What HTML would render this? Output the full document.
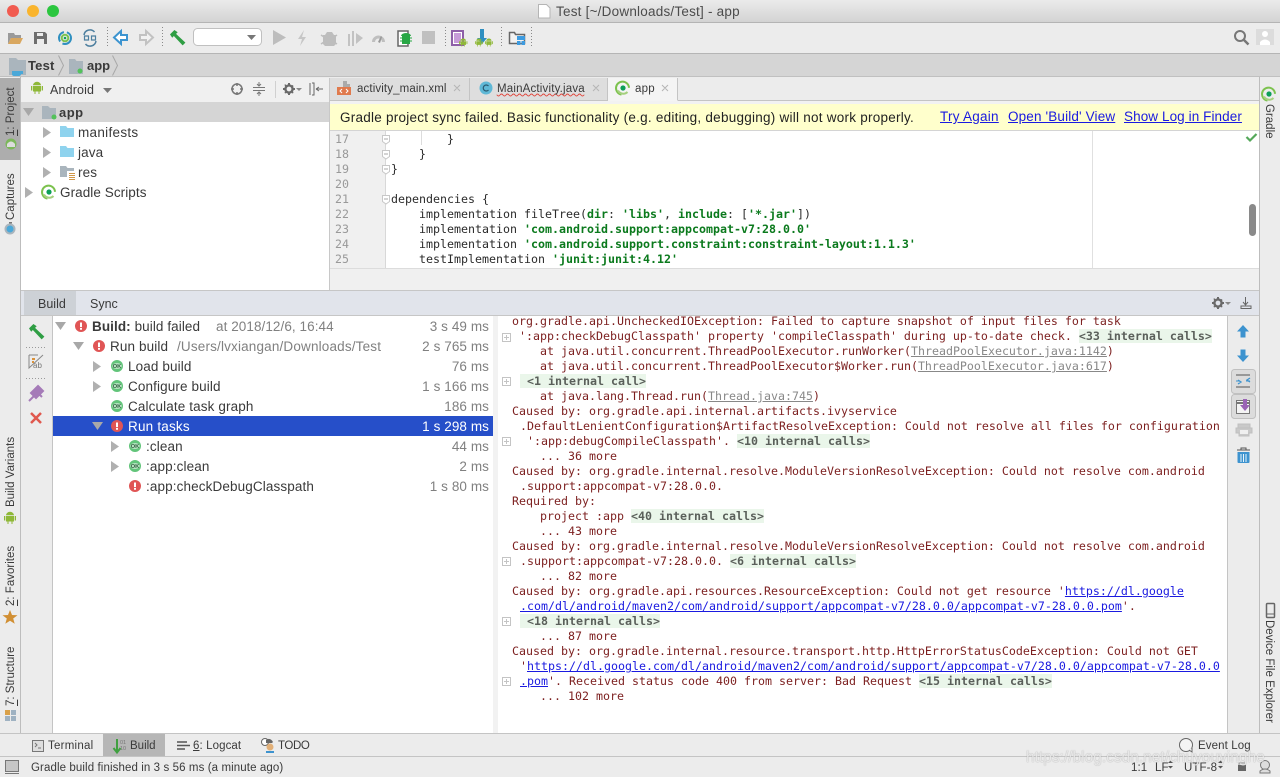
<!DOCTYPE html>
<html><head><meta charset="utf-8"><title>Test</title>
<style>
html,body{margin:0;padding:0}
body{width:1280px;height:777px;overflow:hidden;position:relative;background:#ececec;font-family:"Liberation Sans",sans-serif;font-size:13px;color:#333}
.b{position:absolute}
.t{position:absolute;white-space:pre;line-height:16px;font-size:13.5px;color:#3a3a3a;letter-spacing:.12px}
.x{font-size:11.5px;letter-spacing:.1px}
.r{letter-spacing:.08px;right:791px}
.g{color:#808080}
.m{position:absolute;white-space:pre;line-height:15px;height:15px;font-family:"DejaVu Sans Mono",monospace;font-size:11.63px;color:#7c1f1f}
.c{color:#2b2b2b}
.s{color:#0b7a1d;font-weight:bold}
.n{position:absolute;left:335px;width:30px;font-family:"DejaVu Sans Mono",monospace;font-size:11.63px;line-height:15px;color:#999}
.f{background:#eaf6ea;color:#5a5f5a;font-weight:bold}
.l{color:#1a1ae0;text-decoration:underline}
.u{color:#888;text-decoration:underline}
.v{position:absolute;writing-mode:vertical-rl;transform:rotate(180deg);white-space:pre;font-size:11.5px;line-height:14px;color:#3a3a3a}
.w{position:absolute;writing-mode:vertical-rl;white-space:pre;font-size:11.5px;line-height:14px;color:#3a3a3a}
svg{position:absolute;left:0;top:0}
a{color:#1a1ae0;text-decoration:underline}
</style></head><body>

<div class="b" style="left:0;top:0;width:1280px;height:22px;background:linear-gradient(#ebebeb,#d3d3d3);border-bottom:1px solid #b4b4b4"></div>
<div class="b" style="left:0;top:23px;width:1280px;height:30px;background:#ececec;border-bottom:1px solid #b5b5b5"></div>
<div class="b" style="left:0;top:54px;width:1280px;height:22px;background:#d5d5d5;border-bottom:1px solid #c0c0c0"></div>

<div class="b" style="left:0;top:77px;width:20px;height:656px;background:#ececec;border-right:1px solid #bdbdbd"></div>
<div class="b" style="left:0;top:78px;width:20px;height:82px;background:#adadad"></div>
<div class="b" style="left:1259px;top:77px;width:21px;height:656px;background:#ececec;border-left:1px solid #bdbdbd"></div>

<div class="b" style="left:21px;top:78px;width:309px;height:24px;background:#f0f0f0;border-bottom:1px solid #d8d8d8"></div>
<div class="b" style="left:21px;top:102px;width:309px;height:188px;background:#fff"></div>
<div class="b" style="left:21px;top:102px;width:309px;height:20px;background:#d5d5d5"></div>
<div class="b" style="left:329px;top:78px;width:1px;height:212px;background:#c8c8c8"></div>

<div class="b" style="left:330px;top:78px;width:929px;height:22px;background:#ececec;border-bottom:1px solid #c4c4c4"></div>
<div class="b" style="left:330px;top:78px;width:139px;height:22px;background:#dedede;border-right:1px solid #c4c4c4"></div>
<div class="b" style="left:470px;top:78px;width:137px;height:22px;background:#dedede;border-right:1px solid #c4c4c4"></div>
<div class="b" style="left:608px;top:78px;width:69px;height:22px;background:#f4f4f4;border-right:1px solid #c4c4c4;border-bottom:1px solid #f4f4f4"></div>
<div class="b" style="left:330px;top:101px;width:929px;height:3px;background:#f2f2f2"></div>
<div class="b" style="left:330px;top:104px;width:929px;height:26px;background:#ffffcc;border-bottom:1px solid #d4d4d4"></div>
<div class="b" style="left:330px;top:131px;width:929px;height:137px;background:#fff"></div>
<div class="b" style="left:330px;top:131px;width:55px;height:137px;background:#f0f0f0;border-right:1px solid #d8d8d8"></div>
<div class="b" style="left:1092px;top:131px;width:1px;height:137px;background:#e0e0e0"></div>
<div class="b" style="left:330px;top:268px;width:929px;height:22px;background:#f0f0f0;border-top:1px solid #dcdcdc;box-sizing:border-box"></div>
<div class="b" style="left:1249px;top:204px;width:7px;height:32px;background:#8a8a8a;border-radius:4px"></div>

<div class="b" style="left:21px;top:290px;width:1238px;background:#e1e4eb;border-top:1px solid #c6c6c6;border-bottom:1px solid #c6c6c6;box-sizing:border-box;height:26px"></div>
<div class="b" style="left:24px;top:291px;width:52px;height:24px;background:#cdd1d6"></div>

<div class="b" style="left:21px;top:316px;width:31px;height:417px;background:#ececec;border-right:1px solid #c4c4c4"></div>
<div class="b" style="left:53px;top:316px;width:440px;height:417px;background:#fff"></div>
<div class="b" style="left:493px;top:316px;width:5px;height:417px;background:#f2f2f2"></div>
<div class="b" style="left:498px;top:316px;width:729px;height:417px;background:#fff"></div>
<div class="b" style="left:1227px;top:316px;width:32px;height:417px;background:#ececec;border-left:1px solid #c4c4c4;box-sizing:border-box"></div>
<div class="b" style="left:53px;top:416px;width:440px;height:20px;background:#264fc9"></div>

<div class="b" style="left:0;top:733px;width:1280px;height:23px;background:#ececec;border-top:1px solid #c4c4c4;box-sizing:border-box"></div>
<div class="b" style="left:103px;top:734px;width:62px;height:22px;background:#b6b6b6"></div>
<div class="b" style="left:0;top:756px;width:1280px;height:21px;background:#ececec;border-top:1px solid #c4c4c4;box-sizing:border-box"></div>

<svg width="1280" height="777" viewBox="0 0 1280 777">
<defs>
<g id="tr"><path d="M0 0l8 5.500-8 5.500z" fill="#b0b0b0"/></g>
<g id="td"><path d="M0 0h11l-5.500 8z" fill="#a8a8a8"/></g>
<g id="ok"><circle cx="6" cy="6" r="6" fill="#62c47a"/><ellipse cx="6" cy="6" rx="4.800" ry="3" fill="#b9e4c3"/><text x="6" y="8" font-size="5.800" font-weight="bold" text-anchor="middle" fill="#2f5f3f" font-family="Liberation Sans">OK</text></g>
<g id="er"><circle cx="6" cy="6" r="6" fill="#e05555"/><path d="M5 2.500h2v4.600H5zM5 8h2v1.800H5z" fill="#fff"/></g>
<g id="fo"><path d="M0 1h6l1.500 2H14v9H0z" fill="#8fd3ee"/></g>
<g id="gf"><path d="M0 1h6l1.500 2H14v9H0z" fill="#aab5bd"/></g>
<g id="gr"><path d="M5.500 13.500A6.500 6.500 0 1 1 13 6.800" fill="none" stroke="#7cc24e" stroke-width="2"/><path d="M2 9.500A6 6 0 0 0 11.500 11" fill="none" stroke="#a5d07e" stroke-width="2"/><circle cx="7" cy="7" r="2.600" fill="#0d9f58"/></g>
<g id="gear"><circle cx="6" cy="6" r="3.600" fill="none" stroke="#6a6a6a" stroke-width="2.400"/><path d="M5 0h2v2H5zM5 10h2v2H5zM0 5h2v2H0zM10 5h2v2h-2zM1.500 1.500l1.500 0 .5 1.500-1.500.5zM8.500 8.500l1.500 0 .5 1.500-1.500.5zM1.500 9l1.500-.5.5 1.500-1.500.5zM8.500 2.500l1.500-.5.5 1.500-1.500.5z" fill="#6a6a6a"/></g>
<g id="and"><path d="M2 5h8v5.500H8.500V13h-1v-2.500h-3V13h-1v-2.500H2zM0 5h1.300v4.500H0zM10.700 5H12v4.500h-1.300zM2 4.300A4 3.500 0 0 1 10 4.300z" fill="#8fb838"/></g>
<g id="ham"><path d="M0 4L4 0l3 2-1.500 1.500 8.500 8-2.500 2.500-8-8.500L2 7z" fill="#2f9e44"/></g>
<g id="pl"><path d="M.5.500h8v8h-8zM2 4.500h5M4.500 2v5" fill="#fff" stroke="#c4c4c4"/></g>
<g id="fm"><path d="M.5.500h7v6l-3.500 2.500-3.500-2.500z" fill="#fff" stroke="#c8c8c8"/><path d="M2 4h4" stroke="#aaa"/></g>
</defs>

<circle cx="13" cy="11" r="6" fill="#f15b50"/><circle cx="33" cy="11" r="6" fill="#f9b42d"/><circle cx="53" cy="11" r="6" fill="#2bc63f"/>
<path d="M538.500 4.500h8l3.500 3.500v10h-11.500z" fill="#fff" stroke="#b5b5b5"/>

<path d="M8 33h6l1 2h6v3H11l-3 6z" fill="#9a9a9a"/><path d="M11 38h12l-3 6H8z" fill="#d9a75f"/>
<path d="M34 32h11l2 2v10H34z" fill="#6e6e6e"/><path d="M37 33h6v3h-6zM37 39h7v5h-7z" fill="#ececec"/>
<g transform="translate(57 30)"><circle cx="8" cy="8" r="6" fill="none" stroke="#2f8fc0" stroke-width="2" stroke-dasharray="12 3"/><circle cx="8" cy="8" r="3.300" fill="none" stroke="#7cc24e" stroke-width="2"/><circle cx="8" cy="8" r="1.300" fill="#0d9f58"/></g>
<g transform="translate(82 30)" fill="none" stroke="#4d7f9f" stroke-width="1.500"><path d="M2 5a6 6 0 0 1 10.500-3M14 11a6 6 0 0 1-10.500 3"/><path d="M2.500 6h4v4h-4zM9.500 6h4v4h-4z" stroke-width="1.200"/></g>
<path d="M121 31l-7 6.500 7 6.500v-4h6v-5h-6z" fill="#fff" stroke="#3c94d0" stroke-width="2"/>
<path d="M146 31l7 6.500-7 6.500v-4h-6v-5h6z" fill="#f2f2f2" stroke="#c2c2c2" stroke-width="2"/>
<use href="#ham" transform="translate(170 30) scale(1.100)"/>
<rect x="193.500" y="28.500" width="68" height="17" rx="4" fill="#fff" stroke="#c0c0c0"/>
<path d="M247 35h9l-4.500 5z" fill="#777"/>
<path d="M273 30l13 7.500-13 7.500z" fill="#bdbdbd"/>
<path d="M304 30l-6 9h4l-2 7 6-9h-4z" fill="#c6c6c6"/>
<path d="M323 35h2l2-3h5l2 3h2v9l-2 2h-9l-2-2z" fill="#bdbdbd"/><path d="M321 35l3 2M337 35l-3 2M321 44l3-2M337 44l-3-2" stroke="#bdbdbd" stroke-width="1.500"/>
<path d="M348 34h2v12h-2zM352 31h2v15h-2zM356 33l7 5-7 6z" fill="#c2c2c2"/>
<path d="M372 42a6.500 6.500 0 1 1 13 0h-3a3.500 3.500 0 1 0-7 0z" fill="#bfbfbf"/><path d="M378 42l3-6 1 1-2 6z" fill="#999"/>
<path d="M398 31h10v15h-10z" fill="#fff" stroke="#666" stroke-width="1.500"/>
<path d="M402 36h8v8h-8z" fill="#28a745"/><path d="M400 38h12M400 41h12" stroke="#28a745"/><path d="M401 36a5 3 0 0 1 10 0z" fill="#28a745"/>
<rect x="422" y="31" width="13" height="13" fill="#c0c0c0"/>
<path d="M107.500 27v21M162.500 27v21M445.500 27v21M501.500 27v21M531.500 27v21" stroke="#8a8a8a" stroke-dasharray="1 2" fill="none"/>
<path d="M452 31h11v14h-11z" fill="#fff" stroke="#8e5fa8" stroke-width="2"/><path d="M454 33h7v10h-7z" fill="#c79bd9"/>
<use href="#and" transform="translate(459 38) scale(.7 .65)"/>
<path d="M480 29h4v9h3l-5 6-5-6h3z" fill="#2f8fc0"/>
<use href="#and" transform="translate(485 38) scale(.65)"/><use href="#and" transform="translate(475 38) scale(.65)"/>
<path d="M509.500 32.500h5l1 2h9v9h-15z" fill="#f2f2f2" stroke="#666" stroke-width="1.500"/>
<path d="M517 36h8v4h-8zM517 41h3.500v4H517zM521.500 41h3.500v4h-3.500z" fill="#3d9be0"/>
<circle cx="1240" cy="36" r="5" fill="none" stroke="#777" stroke-width="2"/><path d="M1244 40l4.500 4.500" stroke="#777" stroke-width="2.500"/>
<rect x="1256" y="29" width="18" height="16" fill="#dcdcdc"/><circle cx="1265" cy="34" r="3" fill="#fff"/><path d="M1260 45v-3q5-5 10 0v3z" fill="#fff"/>

<path d="M9 58h7l2 2h8v15H9z" fill="#aab5bd"/><path d="M12 71h9v3q0 2-2 2h-5q-2 0-2-2z" fill="#4ba8d8"/><path d="M21 71h2v3h-2z" fill="#4ba8d8"/>
<path d="M58.500 55.500l5 10-5 10M112.500 55.500l5 10-5 10" fill="none" stroke="#a8a8a8"/>
<path d="M69 59h6l1.500 2H83v13H69z" fill="#aab5bd"/><circle cx="80" cy="71" r="2.500" fill="#52c25a"/>

<use href="#and" transform="translate(31 81)"/>
<path d="M103 88h9l-4.500 5z" fill="#777"/>
<circle cx="237" cy="89" r="5" fill="none" stroke="#777" stroke-width="1.500"/><path d="M237 83v3M237 92v3M231 89h3M240 89h3" stroke="#777" stroke-width="1.500"/>
<path d="M253 87.500h12M253 90.500h12M259 82v4M257 84l2 2 2-2M259 96v-4M257 94l2-2 2 2" stroke="#777" fill="none"/>
<path d="M275.500 81v17" stroke="#d0d0d0"/>
<use href="#gear" transform="translate(283 83)"/><path d="M296 88h6l-3 3z" fill="#888"/>
<path d="M310 83v12M312 83h2v12h-2" fill="none" stroke="#666"/><path d="M316 89h7M316 89l3-2M316 89l3 2" fill="none" stroke="#666"/>

<path d="M343 81h4v6h-4zM347 84h3v3h-3z" fill="#aaa"/><rect x="337" y="87" width="14" height="8" fill="#e07a4d"/><path d="M342 89l-2 2 2 2M346 89l2 2-2 2" fill="none" stroke="#fff"/>
<circle cx="486" cy="88" r="6.500" fill="#5fb8d6"/><path d="M488.500 86a3 3 0 1 0 0 4" fill="none" stroke="#2a5a70" stroke-width="1.200"/>
<path d="M497 94q1.500 2 3 0t3 0 3 0 3 0 3 0 3 0 3 0 3 0 3 0 3 0 3 0 3 0 3 0 3 0 3 0 3 0 3 0 3 0 3 0 3 0 3 0 3 0 3 0 3 0 3 0 3 0 3 0 3 0 3 0" fill="none" stroke="#e0443a" stroke-width=".9" transform="translate(0 1)" stroke-linecap="round"/>
<path d="M454 85l6 6M460 85l-6 6M593 85l6 6M599 85l-6 6M662 85l6 6M668 85l-6 6" stroke="#b5b5b5" fill="none"/>
<use href="#gr" transform="translate(616 81)"/>

<use href="#td" transform="translate(23 108)"/>
<path d="M42 106h6l2 2h6v11H42z" fill="#aab5bd"/><circle cx="54" cy="117" r="2.500" fill="#52c25a"/>
<use href="#tr" transform="translate(43 127)"/><use href="#tr" transform="translate(43 147)"/><use href="#tr" transform="translate(43 167)"/><use href="#tr" transform="translate(25 187)"/>
<use href="#fo" transform="translate(60 125)"/><use href="#fo" transform="translate(60 145)"/><use href="#gf" transform="translate(60 165)"/>
<rect x="67" y="171" width="9" height="10" fill="#fff"/><path d="M69 173.500h6M69 175.500h6M69 177.500h6M69 179.500h6" stroke="#d1984a"/>
<use href="#gr" transform="translate(42 185)"/>

<circle cx="11" cy="144" r="5.500" fill="#7cb85a"/><path d="M7 147h8v-3q-4-5-8 0z" fill="#dcdcdc"/>
<circle cx="10" cy="229" r="5.500" fill="#aab5bd"/><circle cx="10" cy="229" r="3.500" fill="#4ba8d8"/><path d="M9 222h3v1.500H9z" fill="#777"/>
<use href="#and" transform="translate(4 511)"/>
<path d="M10 610l2 5 5.500.2-4.300 3.300 1.500 5.300-4.700-3.100-4.700 3.100 1.500-5.300-4.300-3.300 5.500-.2z" fill="#d18f33"/>
<path d="M5 710h5v5H5z" fill="#d9a14a"/><path d="M11 710h5v5h-5zM5 716h5v5H5zM11 716h5v5h-5z" fill="#9fb2c2"/>

<use href="#gr" transform="translate(1262 87)"/>
<path d="M1246.500 137l3.500 3.500 6.500-6.500" fill="none" stroke="#55a85a" stroke-width="2.200"/>
<rect x="1266.500" y="603.500" width="8" height="14" rx="1" fill="none" stroke="#666" stroke-width="1.500"/><path d="M1267 614h7" stroke="#666"/>

<use href="#fm" transform="translate(382 135)"/><use href="#fm" transform="translate(382 150)"/><use href="#fm" transform="translate(382 165)"/><use href="#fm" transform="translate(382 195)"/>
<path d="M421.500 131v14" stroke="#dcdcdc"/>

<use href="#ham" transform="translate(29 324) scale(1.100)"/>
<path d="M26 347.500h20M26 378.500h20" stroke="#999" stroke-dasharray="1 2"/>
<path d="M29 355h9M29 355v13l14-13" fill="none" stroke="#888"/><path d="M32 358h3v2h-3zM32 361h2v2h-2z" fill="#d9913a"/>
<text x="33" y="368" font-size="8" fill="#777" font-family="Liberation Sans">ab</text>
<path d="M29 401l6-6M34 389l8 8M38 386l5 5-7 7-5-5z" stroke="#a57bb8" fill="#a57bb8" stroke-width="2"/>
<path d="M31 413l10 10M41 413l-10 10" stroke="#e0584e" stroke-width="2.500"/>

<use href="#td" transform="translate(55 322)"/><use href="#er" transform="translate(75 320)"/>
<use href="#td" transform="translate(73 342)"/><use href="#er" transform="translate(93 340)"/>
<use href="#tr" transform="translate(93 361)"/><use href="#ok" transform="translate(111 360)"/>
<use href="#tr" transform="translate(93 381)"/><use href="#ok" transform="translate(111 380)"/>
<use href="#ok" transform="translate(111 400)"/>
<path d="M92 422h11l-5.500 8z" fill="#a8a8a8"/><use href="#er" transform="translate(111 420)"/>
<use href="#tr" transform="translate(111 441)"/><use href="#ok" transform="translate(129 440)"/>
<use href="#tr" transform="translate(111 461)"/><use href="#ok" transform="translate(129 460)"/>
<use href="#er" transform="translate(129 480)"/>

<use href="#gear" transform="translate(1212 297)"/><path d="M1225 302h6l-3 3z" fill="#888"/>
<path d="M1245.500 297v8M1243 302l2.500 3 2.500-3" fill="none" stroke="#666"/><path d="M1241 306h10v2.500h-10z" fill="none" stroke="#666"/>

<path d="M1243 325l6 6.500h-3.500v6h-5v-6H1237z" fill="#3d93cf"/>
<path d="M1243 362l6-6.500h-3.500v-6h-5v6H1237z" fill="#3d93cf"/>
<rect x="1231.500" y="369.500" width="24" height="24" rx="3" fill="#dcdcdc" stroke="#c0c0c0"/>
<rect x="1231.500" y="394.500" width="24" height="24" rx="3" fill="#dcdcdc" stroke="#c0c0c0"/>
<path d="M1236 375h9M1236 387h5M1243 375h7M1240 387h10" stroke="#555"/><path d="M1236 381h14" stroke="#3d93cf" stroke-dasharray="4 6"/><path d="M1250 378l-3 2 3 2M1238 384l3-2-3-2" fill="none" stroke="#3d93cf" stroke-width="1.300"/>
<rect x="1236.500" y="400.500" width="13" height="13" fill="#f4f4f4" stroke="#777"/><path d="M1237 402h12v2h-12z" fill="#777"/><path d="M1243 399h4v6h3l-5 6-5-6h3z" fill="#9a64b5"/>
<path d="M1238 428v-4h12v4M1236 428h16v5h-3v3h-10v-3h-3z" fill="#c9c9c9" stroke="#bfbfbf"/><rect x="1240" y="430" width="8" height="4" fill="#f0f0f0"/>
<path d="M1237 450h13M1241 450v-2h5v2" stroke="#555" fill="none"/><path d="M1237.500 452h12v10a1 1 0 0 1-1 1h-10a1 1 0 0 1-1-1z" fill="#3d93cf"/><path d="M1241 454v8M1243.500 454v8M1246 454v8" stroke="#e8f4fb"/>

<use href="#pl" transform="translate(502 333)"/><use href="#pl" transform="translate(502 377)"/><use href="#pl" transform="translate(502 437)"/><use href="#pl" transform="translate(502 557)"/><use href="#pl" transform="translate(502 617)"/><use href="#pl" transform="translate(502 677)"/>

<rect x="32.500" y="740.500" width="11" height="11" fill="#dedede" stroke="#777"/><path d="M35 743l2 2-2 2M38 748h3" fill="none" stroke="#777"/>
<path d="M117 739v12M113.500 748l3.500 4.500 3.500-4.500" fill="none" stroke="#40a040" stroke-width="2"/>
<text x="120" y="744" font-size="5.500" fill="#777" font-family="Liberation Sans">01</text><text x="120" y="750" font-size="5.500" fill="#777" font-family="Liberation Sans">10</text>
<path d="M177 742h10M177 745.500h13M177 749h8" stroke="#555" stroke-width="1.500"/>
<circle cx="265" cy="742" r="3.500" fill="#fff" stroke="#666"/><circle cx="270" cy="747" r="3.500" fill="#e2b078"/><path d="M266 740q4-3 7 2l-1 1h-6z" fill="#666"/><path d="M266 751h8v2h-8z" fill="#3d93cf"/>
<circle cx="1186" cy="745" r="6.500" fill="#f4f4f4" stroke="#666"/><path d="M1189 750l3 2v-4" fill="#f4f4f4" stroke="#666"/>

<rect x="5.500" y="760.500" width="13" height="11" fill="#c6c6c6" stroke="#777"/><path d="M5 773.500h14" stroke="#777"/>
<path d="M1168 763l2.500-2.500 2.500 2.500zM1168 766l2.500 2.500 2.500-2.500z" fill="#555"/>
<path d="M1218 763l2.500-2.500 2.500 2.500zM1218 766l2.500 2.500 2.500-2.500z" fill="#555"/>
<rect x="1238" y="765" width="8" height="6" fill="#666"/><path d="M1239 765v-2h6v2" fill="none" stroke="#999"/>
<circle cx="1265" cy="765" r="4.500" fill="#ddd" stroke="#777"/><path d="M1260 771q5-4 10 0v2h-10z" fill="#ddd" stroke="#777"/>
</svg>

<div class="t" style="left:556px;top:4px;color:#4c4c4c;letter-spacing:.22px">Test [~/Downloads/Test] - app</div>
<div class="t" style="left:28px;top:58px;font-size:13px;font-weight:bold;letter-spacing:.2px">Test</div>
<div class="t" style="left:87px;top:58px;font-size:13px;font-weight:bold;letter-spacing:0">app</div>
<div class="t" style="left:50px;top:82px;font-size:12.5px;letter-spacing:.15px">Android</div>
<div class="t" style="left:59px;top:105px;font-size:13px;font-weight:bold;letter-spacing:.5px">app</div>
<div class="t" style="left:78px;top:125px;letter-spacing:.3px">manifests</div>
<div class="t" style="left:78px;top:145px">java</div>
<div class="t" style="left:78px;top:165px">res</div>
<div class="t" style="left:60px;top:185px;letter-spacing:.07px">Gradle Scripts</div>

<div class="t" style="left:357px;top:81px;font-size:11.5px;letter-spacing:.12px">activity_main.xml</div>
<div class="t" style="left:497px;top:81px;font-size:11.5px;letter-spacing:.18px">MainActivity.java</div>
<div class="t" style="left:635px;top:81px;font-size:11.5px;letter-spacing:.2px">app</div>
<div class="t" style="left:340px;top:110px;color:#222;letter-spacing:.25px">Gradle project sync failed. Basic functionality (e.g. editing, debugging) will not work properly.</div>
<div class="t" style="left:940px;top:109px;letter-spacing:.25px"><a>Try Again</a></div>
<div class="t" style="left:1008px;top:109px;letter-spacing:.15px"><a>Open 'Build' View</a></div>
<div class="t" style="left:1124px;top:109px;letter-spacing:.09px"><a>Show Log in Finder</a></div>

<div class="n" style="top:132px">17</div><div class="n" style="top:147px">18</div><div class="n" style="top:162px">19</div><div class="n" style="top:177px">20</div><div class="n" style="top:192px">21</div><div class="n" style="top:207px">22</div><div class="n" style="top:222px">23</div><div class="n" style="top:237px">24</div><div class="n" style="top:252px">25</div>
<div class="m c" style="left:447px;top:132px">}</div>
<div class="m c" style="left:419px;top:147px">}</div>
<div class="m c" style="left:391px;top:162px">}</div>
<div class="m c" style="left:391px;top:192px">dependencies {</div>
<div class="m c" style="left:419px;top:207px">implementation fileTree(<span class="s">dir</span>: <span class="s">'libs'</span>, <span class="s">include</span>: [<span class="s">'*.jar'</span>])</div>
<div class="m c" style="left:419px;top:222px">implementation <span class="s">'com.android.support:appcompat-v7:28.0.0'</span></div>
<div class="m c" style="left:419px;top:237px">implementation <span class="s">'com.android.support.constraint:constraint-layout:1.1.3'</span></div>
<div class="m c" style="left:419px;top:252px">testImplementation <span class="s">'junit:junit:4.12'</span></div>

<div class="t" style="left:38px;top:296px;font-size:12.5px;letter-spacing:0">Build</div>
<div class="t" style="left:90px;top:296px;font-size:12.5px;letter-spacing:0">Sync</div>

<div class="t" style="left:92px;top:319px;letter-spacing:.08px"><b>Build:</b> build failed</div>
<div class="t g" style="left:216px;top:319px;letter-spacing:.07px">at 2018/12/6, 16:44</div>
<div class="t" style="left:110px;top:339px">Run build</div>
<div class="t g" style="left:177px;top:339px;letter-spacing:.17px">/Users/lvxiangan/Downloads/Test</div>
<div class="t" style="left:128px;top:359px">Load build</div>
<div class="t" style="left:128px;top:379px">Configure build</div>
<div class="t" style="left:128px;top:399px">Calculate task graph</div>
<div class="t" style="left:128px;top:419px;color:#fff;letter-spacing:.2px">Run tasks</div>
<div class="t" style="left:146px;top:439px">:clean</div>
<div class="t" style="left:146px;top:459px">:app:clean</div>
<div class="t" style="left:146px;top:479px">:app:checkDebugClasspath</div>
<div class="t g r" style="top:319px">3 s 49 ms</div>
<div class="t g r" style="top:339px">2 s 765 ms</div>
<div class="t g r" style="top:359px">76 ms</div>
<div class="t g r" style="top:379px">1 s 166 ms</div>
<div class="t g r" style="top:399px">186 ms</div>
<div class="t r" style="top:419px;color:#fff">1 s 298 ms</div>
<div class="t g r" style="top:439px">44 ms</div>
<div class="t g r" style="top:459px">2 ms</div>
<div class="t g r" style="top:479px">1 s 80 ms</div>

<div class="m" style="left:512px;top:314px">org.gradle.api.UncheckedIOException: Failed to capture snapshot of input files for task</div>
<div class="m" style="left:519px;top:329px">':app:checkDebugClasspath' property 'compileClasspath' during up-to-date check. <span class="f">&lt;33 internal calls&gt;</span></div>
<div class="m" style="left:540px;top:344px">at java.util.concurrent.ThreadPoolExecutor.runWorker(<span class="u">ThreadPoolExecutor.java:1142</span>)</div>
<div class="m" style="left:540px;top:359px">at java.util.concurrent.ThreadPoolExecutor$Worker.run(<span class="u">ThreadPoolExecutor.java:617</span>)</div>
<div class="m" style="left:520px;top:374px"><span class="f"> &lt;1 internal call&gt;</span></div>
<div class="m" style="left:540px;top:389px">at java.lang.Thread.run(<span class="u">Thread.java:745</span>)</div>
<div class="m" style="left:512px;top:404px">Caused by: org.gradle.api.internal.artifacts.ivyservice</div>
<div class="m" style="left:520px;top:419px">.DefaultLenientConfiguration$ArtifactResolveException: Could not resolve all files for configuration</div>
<div class="m" style="left:527px;top:434px">':app:debugCompileClasspath'. <span class="f">&lt;10 internal calls&gt;</span></div>
<div class="m" style="left:540px;top:449px">... 36 more</div>
<div class="m" style="left:512px;top:464px">Caused by: org.gradle.internal.resolve.ModuleVersionResolveException: Could not resolve com.android</div>
<div class="m" style="left:520px;top:479px">.support:appcompat-v7:28.0.0.</div>
<div class="m" style="left:512px;top:494px">Required by:</div>
<div class="m" style="left:540px;top:509px">project :app <span class="f">&lt;40 internal calls&gt;</span></div>
<div class="m" style="left:540px;top:524px">... 43 more</div>
<div class="m" style="left:512px;top:539px">Caused by: org.gradle.internal.resolve.ModuleVersionResolveException: Could not resolve com.android</div>
<div class="m" style="left:520px;top:554px">.support:appcompat-v7:28.0.0. <span class="f">&lt;6 internal calls&gt;</span></div>
<div class="m" style="left:540px;top:569px">... 82 more</div>
<div class="m" style="left:512px;top:584px">Caused by: org.gradle.api.resources.ResourceException: Could not get resource '<span class="l">https://dl.google</span></div>
<div class="m" style="left:520px;top:599px"><span class="l">.com/dl/android/maven2/com/android/support/appcompat-v7/28.0.0/appcompat-v7-28.0.0.pom</span>'.</div>
<div class="m" style="left:520px;top:614px"><span class="f"> &lt;18 internal calls&gt;</span></div>
<div class="m" style="left:540px;top:629px">... 87 more</div>
<div class="m" style="left:512px;top:644px">Caused by: org.gradle.internal.resource.transport.http.HttpErrorStatusCodeException: Could not GET</div>
<div class="m" style="left:520px;top:659px">'<span class="l">https://dl.google.com/dl/android/maven2/com/android/support/appcompat-v7/28.0.0/appcompat-v7-28.0.0</span></div>
<div class="m" style="left:520px;top:674px"><span class="l">.pom</span>'. Received status code 400 from server: Bad Request <span class="f">&lt;15 internal calls&gt;</span></div>
<div class="m" style="left:540px;top:689px">... 102 more</div>

<div class="v" style="left:4px;top:86px;height:50px"><u>1</u>: Project</div>
<div class="v" style="left:4px;top:171px;height:49px">Captures</div>
<div class="v" style="left:4px;top:437px;height:70px">Build Variants</div>
<div class="v" style="left:4px;top:546px;height:60px"><u>2</u>: Favorites</div>
<div class="v" style="left:4px;top:646px;height:60px"><u>7</u>: Structure</div>
<div class="w" style="left:1262px;top:104px">Gradle</div>
<div class="w" style="left:1262px;top:620px">Device File Explorer</div>

<div class="t x" style="left:48px;top:738px;letter-spacing:.25px">Terminal</div>
<div class="t x" style="left:130px;top:738px;letter-spacing:0">Build</div>
<div class="t x" style="left:193px;top:738px"><u>6</u>: Logcat</div>
<div class="t x" style="left:278px;top:738px;letter-spacing:-.4px">TODO</div>
<div class="t x" style="left:1198px;top:738px">Event Log</div>
<div class="t x" style="left:31px;top:760px">Gradle build finished in 3 s 56 ms (a minute ago)</div>
<div class="t x" style="left:1131px;top:760px">1:1</div>
<div class="t x" style="left:1155px;top:760px">LF</div>
<div class="t x" style="left:1184px;top:760px">UTF-8</div>
<div class="t" style="left:1026px;top:750px;font-size:15.5px;letter-spacing:0;color:rgba(255,255,255,.75);text-shadow:0 0 1px rgba(120,120,120,.8)">https://blog.csdn.net/chuyouyinghe</div>
</body></html>
